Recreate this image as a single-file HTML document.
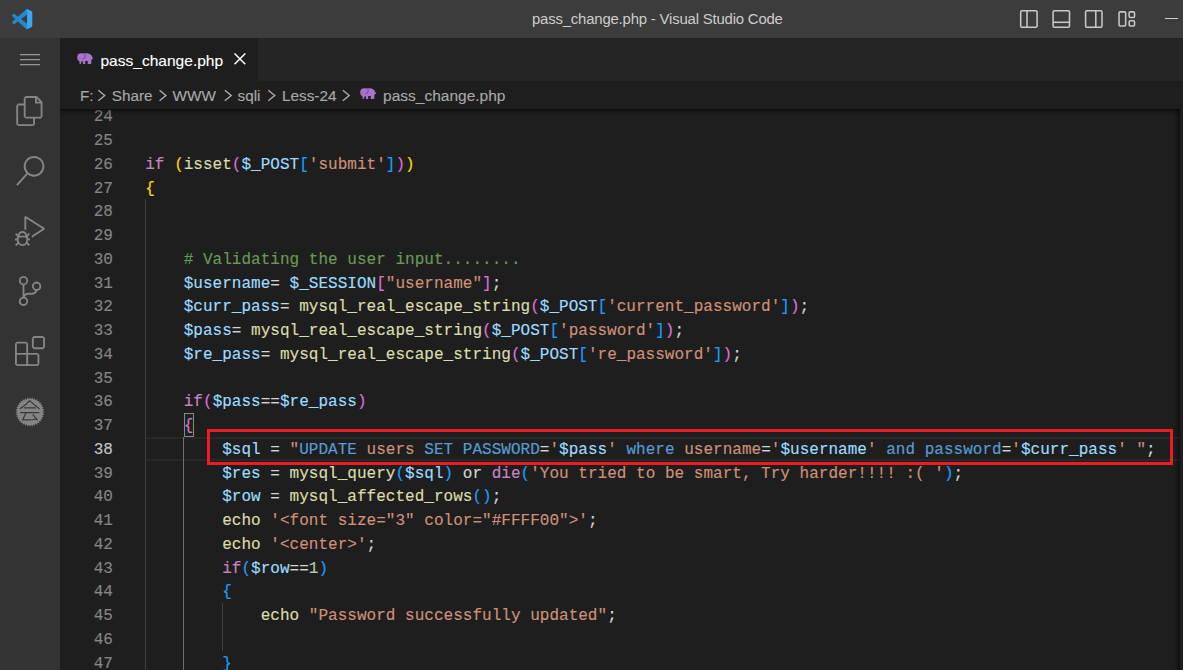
<!DOCTYPE html>
<html><head><meta charset="utf-8">
<style>
*{box-sizing:border-box;margin:0;padding:0}
html,body{width:1183px;height:670px;overflow:hidden;background:#1e1e1e}
body{position:relative;font-family:"Liberation Sans",sans-serif;color:#ccc}
svg{position:absolute;overflow:visible}
#title{position:absolute;left:0;top:0;width:1183px;height:37.5px;background:#3c3c3c}
#title .t{position:absolute;left:532px;top:8.6px;font-size:14.9px;letter-spacing:-0.18px;color:#cccccc;white-space:nowrap;line-height:20px}
#act{position:absolute;left:0;top:37.5px;width:60px;height:633px;background:#333333}
#tabs{position:absolute;left:60px;top:37.5px;width:1123px;height:43.75px;background:#252526}
#tab{position:absolute;left:0;top:0;width:197.5px;height:43.75px;background:#1e1e1e}
#tab .lbl{-webkit-text-stroke:0.12px;position:absolute;left:40.4px;top:13.5px;font-size:15.55px;color:#ffffff;white-space:nowrap;line-height:20px}
#bc{position:absolute;left:60px;top:81.25px;width:1123px;height:27.5px;background:#1e1e1e;font-size:15.3px;color:#a9a9a9}
#bc span{-webkit-text-stroke:0.12px;position:absolute;top:4.5px;line-height:20px;white-space:nowrap}
#ed{position:absolute;left:60px;top:109px;width:1123px;height:561px;background:#1e1e1e;overflow:hidden}
#shadow{position:absolute;left:0;top:0;width:1120px;height:6px;box-shadow:#000 0 6px 6px -6px inset;z-index:5}
.ln,.cl{-webkit-text-stroke:0.15px;position:absolute;font-family:"Liberation Mono",monospace;font-size:16px;line-height:23.75px;height:23.75px;white-space:pre;letter-spacing:0.02px}
.ln{left:0;width:53px;text-align:right;color:#858585}
.ln.a{color:#c6c6c6}
.cl{left:85.25px;color:#d4d4d4}
.k{color:#c586c0}.f{color:#dcdcaa}.v{color:#9cdcfe}.s{color:#ce9178}.c{color:#6a9955}.q{color:#569cd6}.n{color:#b5cea8}
.b1{color:#ffd700}.b2{color:#da70d6}.b3{color:#179fff}
.g{position:absolute;width:1.2px;background:#404040;z-index:2}
.g.a{background:#707070}
#curline{position:absolute;left:86px;top:328px;width:1034px;height:23.75px;border-top:2px solid #282828;border-bottom:2px solid #282828}
#bm{position:absolute;left:124.1px;top:304px;width:9.7px;height:23.6px;border:1.1px solid #888888;background:rgba(0,100,0,0.1)}
#red{position:absolute;left:147px;top:320.1px;width:966.2px;height:35.9px;border:3.3px solid #ed1c24;z-index:6}
#sb{position:absolute;left:1110px;top:0;width:10px;height:561px;box-shadow:#000 -6px 0 6px -6px inset}
</style></head><body>
<div id="title">
<svg id="logo" style="left:12px;top:8.8px" width="20.2" height="20.2" viewBox="0 0 24 24">
<path d="M23.15 2.587L18.21.21a1.494 1.494 0 0 0-1.705.29l-9.46 8.63-4.12-3.128a.999.999 0 0 0-1.276.057L.327 7.261A1 1 0 0 0 .326 8.74L3.899 12 .326 15.26a1 1 0 0 0 .001 1.479L1.65 17.94a.999.999 0 0 0 1.276.057l4.12-3.128 9.46 8.63a1.492 1.492 0 0 0 1.704.29l4.942-2.377A1.5 1.5 0 0 0 24 20.06V3.939a1.5 1.5 0 0 0-.85-1.352zm-5.146 14.861L10.826 12l7.178-5.448v10.896z" fill="#2489ca"/>
<path d="M18.004 1.300V22.700c0 .700-.700 1.300-1.500.800a1.490 1.490 0 0 0 1.706.290l4.940-2.377A1.500 1.500 0 0 0 24 20.060V3.939a1.500 1.500 0 0 0-.850-1.352L18.210.210a1.490 1.490 0 0 0-1.706.290c.800-.500 1.500.100 1.500.800z" fill="#3aa7f2"/>
</svg>
<div class="t">pass_change.php - Visual Studio Code</div>
<svg style="left:0;top:0" width="1183" height="38" fill="none" stroke="#c8c8c8" stroke-width="1.55">
<rect x="1020.7" y="10.8" width="16.4" height="16.4" rx="1.2"/><path d="M1027 10.8V27.2"/>
<rect x="1053.1" y="10.8" width="16.4" height="16.4" rx="1.2"/><path d="M1053.1 22.300H1069.500"/>
<rect x="1085.600" y="10.800" width="16.400" height="16.400" rx="1.200"/><path d="M1095.800 10.800V27.200"/>
<rect x="1119.050" y="11.850" width="6.600" height="14.200" rx="1.200"/>
<rect x="1129.150" y="11.850" width="5.400" height="5.600" rx="1.200"/>
<rect x="1129.150" y="20.750" width="5.400" height="5.300" rx="1.200"/>
<path d="M1165 18.500H1178" stroke="#d0d0d0" stroke-width="1"/>
</svg>
</div>
<div id="act">
<!-- menu -->
<svg style="left:20px;top:11.3px" width="20" height="20" viewBox="0 0 16 16" fill="#969696"><path d="M16 5H0V4h16v1zm0 8H0v-1h16v1zm0-4.008H0V8h16v.992z"/></svg>
<!-- files -->
<svg style="left:15px;top:58.75px" width="30" height="30" viewBox="0 0 24 24" fill="#858585"><path d="M17.5 0h-9L7 1.500V6H2.500L1 7.500v15.070L2.500 24h12.070L16 22.570V18h4.700l1.300-1.430V4.500L17.500 0zm0 2.120l2.380 2.380H17.500V2.120zm-3 20.380h-12v-15H7v9.070L8.500 18h6v4.500zm6-6h-12v-15H16V6h4.500v10.500z"/></svg>
<!-- search -->
<svg style="left:15px;top:118.75px" width="30" height="30" viewBox="0 0 24 24" fill="#858585"><path d="M15.250 0a8.250 8.250 0 0 0-6.180 13.720L1 22.880l1.120 1 8.050-9.120A8.251 8.251 0 1 0 15.250.010V0zm0 15a6.750 6.750 0 1 1 0-13.500 6.750 6.750 0 0 1 0 13.500z"/></svg>
<!-- debug -->
<svg style="left:15px;top:178.75px" width="30" height="30" viewBox="0 0 24 24" fill="#858585"><path d="M10.940 13.500l-1.320 1.320a3.730 3.730 0 0 0-7.240 0L1.060 13.500 0 14.560l1.720 1.720-.22.220V18H0v1.500h1.500v.080c.077.489.214.966.410 1.420L0 22.940 1.060 24l1.650-1.650A4.308 4.308 0 0 0 6 24a4.310 4.310 0 0 0 3.290-1.650L10.940 24 12 22.940 10.090 21c.198-.464.336-.951.410-1.450v-.1H12V18h-1.500v-1.500l-.22-.22L12 14.560l-1.060-1.060zM6 13.500a2.250 2.250 0 0 1 2.250 2.250h-4.500A2.250 2.250 0 0 1 6 13.500zm3 6a3.330 3.330 0 0 1-3 3 3.330 3.330 0 0 1-3-3v-2.250h6v2.250zm14.760-9.900v1.260L13.500 17.370V15.600l8.500-5.370L9 2v9.460a5.070 5.070 0 0 0-1.500-.72V.630L8.640 0l15.120 9.600z"/></svg>
<!-- scm -->
<svg style="left:15px;top:238.75px" width="30" height="30" viewBox="0 0 24 24" fill="#858585"><path d="M21.007 8.222A3.738 3.738 0 0 0 15.045 5.200a3.737 3.737 0 0 0 1.156 6.583 2.988 2.988 0 0 1-2.668 1.670h-2.990a4.456 4.456 0 0 0-2.989 1.165V7.400a3.737 3.737 0 1 0-1.494 0v9.117a3.776 3.776 0 1 0 1.816.099 2.990 2.990 0 0 1 2.668-1.667h2.990a4.484 4.484 0 0 0 4.223-3.039 3.736 3.736 0 0 0 3.250-3.687zM4.565 3.738a2.242 2.242 0 1 1 4.484 0 2.242 2.242 0 0 1-4.484 0zm4.484 16.441a2.242 2.242 0 1 1-4.484 0 2.242 2.242 0 0 1 4.484 0zm8.221-9.715a2.242 2.242 0 1 1 0-4.485 2.242 2.242 0 0 1 0 4.485z"/></svg>
<!-- extensions -->
<svg style="left:15px;top:298.75px" width="30" height="30" viewBox="0 0 24 24" fill="#858585"><path d="M13.500 1.500L15 0h7.500L24 1.500V9l-1.500 1.500H15L13.500 9V1.500zm1.500 0V9h7.500V1.500H15zM0 15V6l1.500-1.500H9L10.500 6v7.500H18l1.500 1.500v7.500L18 24H1.500L0 22.500V15zm9-1.500V6H1.500v7.500H9zM9 15H1.500v7.500H9V15zm1.500 7.500H18V15h-7.500v7.500z"/></svg>
<!-- custom badge -->
<svg style="left:15.26px;top:359.1px" width="30" height="30" viewBox="0 0 30 30"><polygon points="15.00,0.40 16.11,2.35 17.54,0.62 18.29,2.73 19.99,1.28 20.37,3.49 22.30,2.36 22.28,4.60 24.38,3.82 23.98,6.02 26.18,5.62 25.40,7.72 27.64,7.70 26.51,9.63 28.72,10.01 27.27,11.71 29.38,12.46 27.65,13.89 29.60,15.00 27.65,16.11 29.38,17.54 27.27,18.29 28.72,19.99 26.51,20.37 27.64,22.30 25.40,22.28 26.18,24.38 23.98,23.98 24.38,26.18 22.28,25.40 22.30,27.64 20.37,26.51 19.99,28.72 18.29,27.27 17.54,29.38 16.11,27.65 15.00,29.60 13.89,27.65 12.46,29.38 11.71,27.27 10.01,28.72 9.63,26.51 7.70,27.64 7.72,25.40 5.62,26.18 6.02,23.98 3.82,24.38 4.60,22.28 2.36,22.30 3.49,20.37 1.28,19.99 2.73,18.29 0.62,17.54 2.35,16.11 0.40,15.00 2.35,13.89 0.62,12.46 2.73,11.71 1.28,10.01 3.49,9.63 2.36,7.70 4.60,7.72 3.82,5.62 6.02,6.02 5.62,3.82 7.72,4.60 7.70,2.36 9.63,3.49 10.01,1.28 11.71,2.73 12.46,0.62 13.89,2.35" fill="#858585"/><g fill="none" stroke="#383838" stroke-width="1.25" stroke-linecap="round" transform="translate(15 15)"><path d="M-10 -3.3Q-4 -7 -0.3 -11.4Q4 -7 9.4 -3.3"/><path d="M-5.6 -4.1H5.3"/><path d="M-9.4 0.65H8.8"/><path d="M-4.1 0.9L-7.2 7.8Q0.5 8.4 6.2 7.0"/><path d="M3.1 2.8L7.2 7.9"/></g></svg>
</div>
<div id="tabs"><div id="tab">
<svg class="ele" style="left:16.6px;top:15.5px" width="16.5" height="11.2" viewBox="0 0 16.5 11.2"><path d="M1.4 1.0C2.5 0.1 4.5 0 6.4 0.5C8 0.3 10.5 0.3 12.2 0.7C13.5 1.1 14.4 2 14.8 3C15.2 4 15.5 5 16.4 5.6L15.6 6C15 5.8 14.700 6.200 14.500 6.800L14.200 11H10.700V8H8.200V11H5.900V8.200L5.000 8.200C4.600 8.700 4.000 9.200 4.100 9.700L3.700 11H2.500L2.600 9.800C2.800 9.200 2.600 8.600 1.800 8.100C0.800 7.300 0.200 6 0.200 4.600C0.200 3.200 0.600 1.900 1.400 1.000Z" fill="#a874c8"/><path d="M8.000 0.900C8.200 2.500 8.300 3.800 7.800 4.700C7.300 5.500 6.500 5.800 5.600 5.700" fill="none" stroke="#4a3cc0" stroke-width="0.800"/><circle cx="2.100" cy="4.400" r="0.450" fill="#8a3f8a"/><circle cx="2.100" cy="6.400" r="0.450" fill="#8a3f8a"/></svg>
<div class="lbl">pass_change.php</div>
<svg style="left:174.4px;top:15.9px" width="11.8" height="11.8" viewBox="0 0 11.8 11.8" stroke="#ffffff" stroke-width="1.5" fill="none"><path d="M0.5 0.5L11.3 11.3M11.3 0.5L0.5 11.3"/></svg>
</div></div>
<div id="bc">
<span style="left:20px">F:</span>
<span style="left:51.750px">Share</span>
<span style="left:112.500px">WWW</span>
<span style="left:177.500px">sqli</span>
<span style="left:222px">Less-24</span>
<span style="left:323.1px;font-size:15.5px">pass_change.php</span>
<svg style="left:0;top:0" width="400" height="28" fill="none" stroke="#a9a9a9" stroke-width="1.45"><path d="M38.3 9.2l6.400 5.300-6.400 5.300M99.500 9.200l6.400 5.300-6.400 5.300M164.800 9.200l6.400 5.300-6.400 5.300M208.300 9.200l6.400 5.300-6.400 5.300M282.800 9.200l6.400 5.300-6.400 5.300"/></svg>
<svg class="ele" style="left:299.6px;top:6.75px" width="16.5" height="11.2" viewBox="0 0 16.5 11.2"><path d="M1.4 1.0C2.5 0.1 4.5 0 6.4 0.5C8 0.3 10.5 0.3 12.2 0.7C13.5 1.1 14.4 2 14.8 3C15.2 4 15.5 5 16.4 5.6L15.6 6C15 5.8 14.700 6.200 14.500 6.800L14.200 11H10.700V8H8.200V11H5.900V8.200L5.000 8.200C4.600 8.700 4.000 9.200 4.100 9.700L3.700 11H2.500L2.600 9.800C2.800 9.200 2.600 8.600 1.800 8.100C0.800 7.300 0.200 6 0.200 4.600C0.200 3.200 0.600 1.900 1.400 1.000Z" fill="#a874c8"/><path d="M8.000 0.900C8.200 2.500 8.300 3.800 7.800 4.700C7.300 5.500 6.500 5.800 5.600 5.700" fill="none" stroke="#4a3cc0" stroke-width="0.800"/><circle cx="2.100" cy="4.400" r="0.450" fill="#8a3f8a"/><circle cx="2.100" cy="6.400" r="0.450" fill="#8a3f8a"/></svg>
</div>
<div id="ed"><div id="shadow"></div>
<div class="g" style="left:84.9px;top:90.4px;height:471px"></div>
<div class="g" style="left:123.1px;top:328px;height:233px;background:#707070"></div>
<div class="g" style="left:161.9px;top:494.2px;height:47.6px"></div>
<div id="curline"></div>
<div id="bm"></div>
<div class="ln" style="top:-2.65px">24</div>
<div class="ln" style="top:21.10px">25</div>
<div class="ln" style="top:44.85px">26</div>
<div class="cl" style="top:44.85px"><span class="k">if</span> <span class="b1">(</span><span class="f">isset</span><span class="b2">(</span><span class="v">$_POST</span><span class="b3">[</span><span class="s">'submit'</span><span class="b3">]</span><span class="b2">)</span><span class="b1">)</span></div>
<div class="ln" style="top:68.60px">27</div>
<div class="cl" style="top:68.60px"><span class="b1">{</span></div>
<div class="ln" style="top:92.35px">28</div>
<div class="ln" style="top:116.10px">29</div>
<div class="ln" style="top:139.85px">30</div>
<div class="cl" style="top:139.85px">    <span class="c"># Validating the user input........</span></div>
<div class="ln" style="top:163.60px">31</div>
<div class="cl" style="top:163.60px">    <span class="v">$username</span>= <span class="v">$_SESSION</span><span class="b2">[</span><span class="s">"username"</span><span class="b2">]</span>;</div>
<div class="ln" style="top:187.35px">32</div>
<div class="cl" style="top:187.35px">    <span class="v">$curr_pass</span>= <span class="f">mysql_real_escape_string</span><span class="b2">(</span><span class="v">$_POST</span><span class="b3">[</span><span class="s">'current_password'</span><span class="b3">]</span><span class="b2">)</span>;</div>
<div class="ln" style="top:211.10px">33</div>
<div class="cl" style="top:211.10px">    <span class="v">$pass</span>= <span class="f">mysql_real_escape_string</span><span class="b2">(</span><span class="v">$_POST</span><span class="b3">[</span><span class="s">'password'</span><span class="b3">]</span><span class="b2">)</span>;</div>
<div class="ln" style="top:234.85px">34</div>
<div class="cl" style="top:234.85px">    <span class="v">$re_pass</span>= <span class="f">mysql_real_escape_string</span><span class="b2">(</span><span class="v">$_POST</span><span class="b3">[</span><span class="s">'re_password'</span><span class="b3">]</span><span class="b2">)</span>;</div>
<div class="ln" style="top:258.60px">35</div>
<div class="ln" style="top:282.35px">36</div>
<div class="cl" style="top:282.35px">    <span class="k">if</span><span class="b2">(</span><span class="v">$pass</span>==<span class="v">$re_pass</span><span class="b2">)</span></div>
<div class="ln" style="top:306.10px">37</div>
<div class="cl" style="top:306.10px">    <span class="b2">{</span></div>
<div class="ln a" style="top:329.85px">38</div>
<div class="cl" style="top:329.85px">        <span class="v">$sql</span> = <span class="s">"</span><span class="q">UPDATE</span><span class="s"> users </span><span class="q">SET</span><span class="s"> </span><span class="q">PASSWORD</span>=<span class="s">'</span><span class="v">$pass</span><span class="s">' </span><span class="q">where</span><span class="s"> username</span>=<span class="s">'</span><span class="v">$username</span><span class="s">' </span><span class="q">and</span><span class="s"> </span><span class="q">password</span>=<span class="s">'</span><span class="v">$curr_pass</span><span class="s">' "</span>;</div>
<div class="ln" style="top:353.60px">39</div>
<div class="cl" style="top:353.60px">        <span class="v">$res</span> = <span class="f">mysql_query</span><span class="b3">(</span><span class="v">$sql</span><span class="b3">)</span> or <span class="k">die</span><span class="b3">(</span><span class="s">'You tried to be smart, Try harder!!!! :( '</span><span class="b3">)</span>;</div>
<div class="ln" style="top:377.35px">40</div>
<div class="cl" style="top:377.35px">        <span class="v">$row</span> = <span class="f">mysql_affected_rows</span><span class="b3">(</span><span class="b3">)</span>;</div>
<div class="ln" style="top:401.10px">41</div>
<div class="cl" style="top:401.10px">        <span class="f">echo</span> <span class="s">'&lt;font size="3" color="#FFFF00"&gt;'</span>;</div>
<div class="ln" style="top:424.85px">42</div>
<div class="cl" style="top:424.85px">        <span class="f">echo</span> <span class="s">'&lt;center&gt;'</span>;</div>
<div class="ln" style="top:448.60px">43</div>
<div class="cl" style="top:448.60px">        <span class="k">if</span><span class="b3">(</span><span class="v">$row</span>==<span class="n">1</span><span class="b3">)</span></div>
<div class="ln" style="top:472.35px">44</div>
<div class="cl" style="top:472.35px">        <span class="b3">{</span></div>
<div class="ln" style="top:496.10px">45</div>
<div class="cl" style="top:496.10px">            <span class="f">echo</span> <span class="s">"Password successfully updated"</span>;</div>
<div class="ln" style="top:519.85px">46</div>
<div class="ln" style="top:543.60px">47</div>
<div class="cl" style="top:543.60px">        <span class="b3">}</span></div>
<div id="red"></div>
<div id="sb"></div>
</div>
</body></html>
